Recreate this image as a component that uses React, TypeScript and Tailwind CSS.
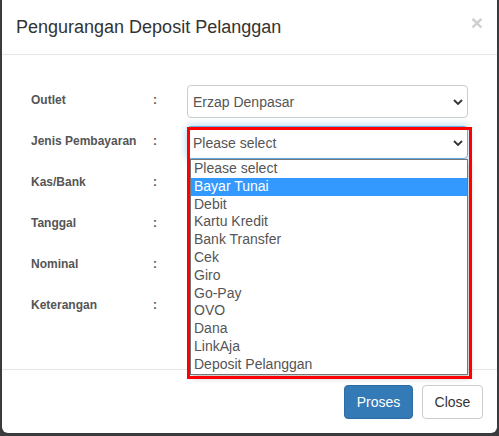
import React from "react";

const labels = ["Outlet", "Jenis Pembayaran", "Kas/Bank", "Tanggal", "Nominal", "Keterangan"];

const options = [
  "Please select",
  "Bayar Tunai",
  "Debit",
  "Kartu Kredit",
  "Bank Transfer",
  "Cek",
  "Giro",
  "Go-Pay",
  "OVO",
  "Dana",
  "LinkAja",
  "Deposit Pelanggan",
];

const Chevron = () => (
  <svg width="10" height="6" viewBox="0 0 10 6" className="shrink-0">
    <path d="M1 1l4 4 4-4" fill="none" stroke="#333" strokeWidth="1.8" />
  </svg>
);

const SelectBox = ({ value, focused }: { value: string; focused?: boolean }) => (
  <div
    className={`h-[33px] w-[281px] flex items-center justify-between pl-[5px] pr-[4px] rounded-[4px] border bg-white text-[14px] text-[#555] ${
      focused ? "border-[#66afe9] shadow-[0_0_8px_rgba(102,175,233,0.6)]" : "border-[#ccc]"
    }`}
  >
    <span className="mt-[1px]">{value}</span>
    <Chevron />
  </div>
);

const App = () => {
  return (
    <div
      className="w-[499px] h-[436px] bg-[#3a3b3d] pl-[2px] pr-[2px] overflow-hidden"
      style={{ fontFamily: '"Liberation Sans", Arial, sans-serif' }}
    >
      <div className="w-[495px] h-[433px] bg-white rounded-b-[6px] flex flex-col">
        <div className="h-[55px] shrink-0 border-b border-[#e5e5e5] flex items-center justify-between pl-[14px] pr-[14px]">
          <h4 className="text-[18px] text-[#333] leading-none -mt-[1px]">Pengurangan Deposit Pelanggan</h4>
          <span className="text-[21px] font-bold text-[#cfcfcf] leading-none -mt-[9px]">×</span>
        </div>

        <div className="flex-1 pt-[30px] pl-[29px] pr-[29px] flex flex-col gap-[8px]">
          {labels.map((label, i) => (
            <div key={label} className="relative h-[33px] flex items-center">
              <span className="w-[122px] text-[12px] font-bold text-[#555] -mt-[3px]">{label}</span>
              <span className="w-[34px] text-[12px] font-bold text-[#555] -mt-[3px]">:</span>
              {i === 0 && <SelectBox value="Erzap Denpasar" />}
              {i === 1 && (
                <>
                  <SelectBox value="Please select" focused />
                  <div className="absolute left-[159px] top-[33px] w-[278px] h-[216px] bg-white border border-[#767676] shadow-[2px_3px_6px_rgba(0,0,0,0.25)] z-10">
                    {options.map((o, j) => (
                      <div
                        key={o}
                        className={`h-[17.8px] leading-[17.8px] pl-[3px] text-[14px] ${
                          j === 1 ? "bg-[#3399ff] text-white" : "text-[#555]"
                        }`}
                      >
                        {o}
                      </div>
                    ))}
                  </div>
                  <div className="absolute left-[156px] top-[1px] w-[285px] h-[252px] border-[3px] border-[#ff0000] z-20 pointer-events-none" />
                </>
              )}
            </div>
          ))}
        </div>

        <div className="h-[64px] shrink-0 border-t border-[#e5e5e5] pt-[15px] pr-[14px] flex justify-end gap-[9px]">
          <button className="h-[34px] w-[69px] rounded-[4px] bg-[#337ab7] border border-[#2e6da4] text-white text-[14px]">
            Proses
          </button>
          <button className="h-[34px] w-[61px] rounded-[4px] bg-white border border-[#ccc] text-[#333] text-[14px]">
            Close
          </button>
        </div>
      </div>
    </div>
  );
};

export default App;
